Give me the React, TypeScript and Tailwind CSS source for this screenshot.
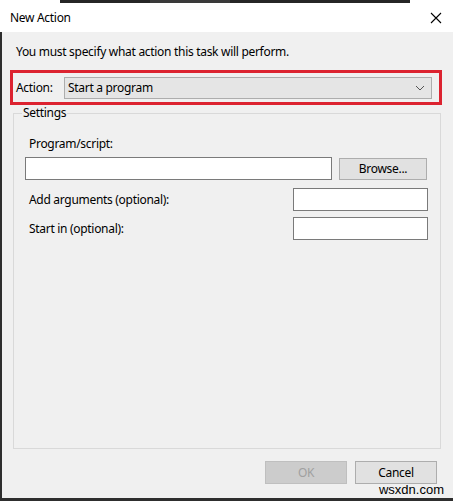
import React from "react";

export default function App() {
  return (
    <div
      className="w-[453px] h-[501px] flex flex-col bg-[#f0f0f0] text-black overflow-hidden tracking-[-0.3px]"
      style={{ fontFamily: '"Noto Sans", "Open Sans", sans-serif' }}
    >
      {/* background window strip */}
      <div className="h-[3px] flex shrink-0">
        <div className="w-[60px] bg-white" />
        <div className="w-[90px] bg-[#262626]" />
        <div className="w-[80px] bg-[#3a3a3a]" />
        <div className="w-[180px] bg-[#262626]" />
        <div className="flex-1 bg-white" />
      </div>
      {/* title bar */}
      <div className="h-[29px] bg-white flex items-center justify-between shrink-0">
        <span className="pl-[10px] text-[12px] leading-none">New Action</span>
        <svg width="12" height="12" viewBox="0 0 12 12" className="mr-[11px]">
          <path d="M1 1 L11 11 M11 1 L1 11" stroke="#000" strokeWidth="1.1" />
        </svg>
      </div>
      {/* body */}
      <div className="flex-1 flex flex-col border-l-2 border-b-[3px] border-[#2e2e2e] relative">
        <div className="pl-[14px] pt-[12px] text-[12px] leading-[16px]">
          You must specify what action this task will perform.
        </div>
        {/* red highlighted action row */}
        <div className="mt-[10px] ml-[8px] w-[432px] h-[35px] border-[3px] border-[#dc2330] flex items-center">
          <span className="pl-[3px] text-[12px] w-[51px]">Action:</span>
          <div className="w-[368px] h-[22px] bg-[#e5e5e5] border border-[#adadad] flex items-center justify-between pl-[3px] pr-[6px]">
            <span className="text-[12px]">Start a program</span>
            <svg width="10" height="6" viewBox="0 0 10 6">
              <path d="M1 1 L5 5 L9 1" fill="none" stroke="#555" strokeWidth="1" />
            </svg>
          </div>
        </div>
        {/* settings group */}
        <div className="mt-[8px] ml-[11px] w-[428px] h-[336px] border border-[#d9d9d9] relative pt-[22px]">
          <span className="absolute left-[8px] top-[-9px] px-[1px] bg-[#f0f0f0] text-[12px] leading-[16px]">
            Settings
          </span>
          <div className="pl-[15px] text-[12px] leading-[16px]">Program/script:</div>
          <div className="mt-[5px] ml-[11px] flex items-center">
            <div className="w-[307px] h-[23px] bg-white border border-[#7a7a7a]" />
            <div className="ml-[7px] w-[88px] h-[22px] bg-[#e1e1e1] border border-[#adadad] flex items-center justify-center text-[12px]">
              Browse...
            </div>
          </div>
          <div className="mt-[8px] flex items-center">
            <span className="pl-[15px] w-[279px] text-[12px]">Add arguments (optional):</span>
            <div className="w-[135px] h-[23px] bg-white border border-[#7a7a7a]" />
          </div>
          <div className="mt-[6px] flex items-center">
            <span className="pl-[15px] w-[279px] text-[12px]">Start in (optional):</span>
            <div className="w-[135px] h-[23px] bg-white border border-[#7a7a7a]" />
          </div>
        </div>
        {/* buttons */}
        <div className="mt-[12px] flex justify-end pr-[16px] gap-[8px]">
          <div className="w-[82px] h-[23px] bg-[#cccccc] border border-[#bfbfbf] flex items-center justify-center text-[12px] text-[#a0a0a0]">
            OK
          </div>
          <div className="w-[82px] h-[23px] bg-[#e1e1e1] border border-[#adadad] flex items-center justify-center text-[12px]">
            Cancel
          </div>
        </div>
        <span
          className="absolute right-[9px] bottom-[1px] text-[13px] leading-[14px] text-black tracking-normal"
          style={{ fontFamily: '"Liberation Sans", Arial, sans-serif' }}
        >
          wsxdn.com
        </span>
      </div>
    </div>
  );
}
